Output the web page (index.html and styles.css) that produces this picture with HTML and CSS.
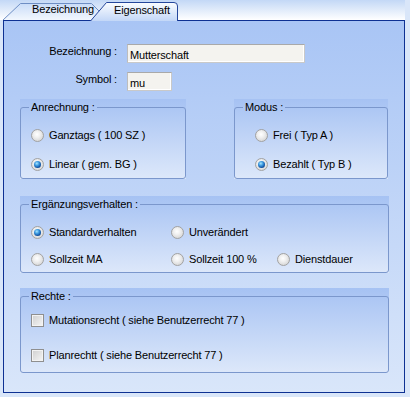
FILE: index.html
```html
<!DOCTYPE html>
<html>
<head>
<meta charset="utf-8">
<link rel="stylesheet" href="styles.css">
</head>
<body>
<div class="window">
  <div class="tabstrip">
    <div class="tab tab-inactive">
      <svg class="tab-shape" width="98" height="20" viewBox="0 0 98 20">
        <defs>
          <linearGradient id="gi" x1="0" y1="0" x2="0" y2="1">
            <stop offset="0" stop-color="#c9dcf8"/>
            <stop offset="1" stop-color="#f3f8fe"/>
          </linearGradient>
        </defs>
        <path d="M0.5 20.5 L18.5 3.5 H89.5 L97.5 11.5 V20.5" fill="url(#gi)" stroke="#6e8ec4" stroke-width="1"/>
      </svg>
      <span class="tab-label">Bezeichnung</span>
    </div>
    <div class="tab tab-active">
      <svg class="tab-shape" width="88" height="21" viewBox="0 0 88 21">
        <defs>
          <linearGradient id="ga" x1="0" y1="0" x2="0" y2="1">
            <stop offset="0" stop-color="#fbfdff"/>
            <stop offset="1" stop-color="#c3d7f7"/>
          </linearGradient>
        </defs>
        <path d="M0.5 21 L16.5 2.5 H84 Q87.5 2.5 87.5 6 V21" fill="url(#ga)" stroke="#25479c" stroke-width="1"/>
      </svg>
      <span class="tab-label">Eigenschaft</span>
    </div>
  </div>
  <div class="panel">
    <div class="form">
      <span class="form-label">Bezeichnung :</span>
      <input class="field field-wide" type="text" value="Mutterschaft">
      <span class="form-label">Symbol :</span>
      <input class="field field-short" type="text" value="mu">
    </div>

    <div class="group-row">
      <div class="group group-anrechnung">
        <fieldset class="box box-two">
          <legend>Anrechnung :</legend>
          <div class="opt"><span class="radio"></span><span>Ganztags ( 100 SZ )</span></div>
          <div class="opt"><span class="radio on"><span class="dot"></span></span><span>Linear ( gem. BG )</span></div>
        </fieldset>
      </div>
      <div class="group group-modus">
        <fieldset class="box box-two">
          <legend>Modus :</legend>
          <div class="opt opt-modus"><span class="radio"></span><span>Frei ( Typ A )</span></div>
          <div class="opt opt-modus"><span class="radio on"><span class="dot"></span></span><span>Bezahlt ( Typ B )</span></div>
        </fieldset>
      </div>
    </div>

    <div class="group group-erg">
      <fieldset class="box box-erg">
        <legend>Ergänzungsverhalten :</legend>
        <div class="erg-grid">
          <div class="opt"><span class="radio on"><span class="dot"></span></span><span>Standardverhalten</span></div>
          <div class="opt"><span class="radio"></span><span>Unverändert</span></div>
          <div></div>
          <div class="opt"><span class="radio"></span><span>Sollzeit MA</span></div>
          <div class="opt"><span class="radio"></span><span>Sollzeit 100 %</span></div>
          <div class="opt"><span class="radio"></span><span>Dienstdauer</span></div>
        </div>
      </fieldset>
    </div>

    <div class="group group-rechte">
      <fieldset class="box box-rechte">
        <legend>Rechte :</legend>
        <div class="opt"><span class="check"></span><span>Mutationsrecht ( siehe Benutzerrecht 77 )</span></div>
        <div class="opt"><span class="check"></span><span>Planrechtt ( siehe Benutzerrecht 77 )</span></div>
      </fieldset>
    </div>
  </div>
</div>
</body>
</html>
```

FILE: styles.css
```css
html, body {
  margin: 0;
  padding: 0;
}

body {
  width: 410px;
  height: 397px;
  overflow: hidden;
  background: #d9e6f9;
  font-family: "Liberation Sans", Arial, sans-serif;
  font-size: 11px;
  line-height: 13px;
  letter-spacing: -0.15px;
  color: #000;
}

.window {
  width: 405px;
}

.tabstrip {
  height: 20px;
  display: flex;
  align-items: flex-start;
  padding-left: 2px;
  background: linear-gradient(#c3d8f6, #ffffff);
  position: relative;
  z-index: 2;
}

.tab {
  position: relative;
  flex: none;
}

.tab-shape {
  position: absolute;
  left: 0;
  top: 0;
  display: block;
}

.tab-label {
  position: relative;
  display: block;
}

.tab-inactive {
  width: 98px;
  height: 20px;
}

.tab-inactive .tab-label {
  padding: 3px 0 0 30px;
}

.tab-active {
  width: 88px;
  height: 21px;
  margin-left: -10px;
}

.tab-active .tab-label {
  padding: 4px 0 0 24px;
}

.panel {
  margin-left: 3px;
  width: 402px;
  height: 373px;
  box-sizing: border-box;
  border: 1px solid #0e3193;
  background: linear-gradient(#a9c5f5, #d9e6fa);
  padding: 23px 15px 0 16px;
}

.form {
  display: grid;
  grid-template-columns: 97px auto;
  column-gap: 10px;
  row-gap: 9px;
  justify-items: start;
}

.form-label {
  justify-self: end;
  padding-top: 1px;
}

.field {
  box-sizing: border-box;
  height: 19px;
  margin: 0;
  padding: 3px 2px 1px 2px;
  font-family: "Liberation Sans", Arial, sans-serif;
  font-size: 11px;
  line-height: 13px;
  letter-spacing: -0.15px;
  color: #000;
  background: #f4f3ef;
  border: 1px solid #c9c9c9;
  border-top-color: #a9a9a9;
  border-left-color: #bdbdbd;
  box-shadow: inset -1px -1px 0 #ffffff;
  outline: none;
}

.field-wide {
  width: 178px;
}

.field-short {
  width: 45px;
}

.group-row {
  display: flex;
  gap: 48px;
  margin-top: 8px;
}

.group {
  background: linear-gradient(#a6c2f3, #dde8fa);
  padding-top: 2px;
}

.group-anrechnung {
  width: 166px;
}

.group-modus {
  width: 154px;
}

.group-erg {
  margin-top: 17px;
}

.group-rechte {
  margin-top: 15px;
}

.box {
  margin: 0;
  border: 1px solid #7b97cc;
  border-radius: 3px;
  padding: 13px 4px 6px 8px;
  min-width: 0;
}

.box legend {
  padding: 0 2px;
  line-height: 13px;
}

.box-two {
  display: flex;
  flex-direction: column;
  gap: 13px;
}

.box-erg {
  padding-bottom: 5px;
}

.box-rechte {
  padding-top: 9px;
  padding-bottom: 9px;
  display: flex;
  flex-direction: column;
  gap: 19px;
}

.erg-grid {
  display: grid;
  grid-template-columns: 140px 106px auto;
  row-gap: 11px;
  margin-left: 2px;
}

.erg-grid .opt {
  margin-left: 0;
}

.opt {
  display: flex;
  align-items: center;
  height: 16px;
  gap: 5px;
  margin-left: 2px;
  white-space: nowrap;
}

.opt-modus {
  margin-left: 12px;
}

.radio {
  flex: none;
  width: 13px;
  height: 13px;
  box-sizing: border-box;
  border-radius: 50%;
  border: 1px solid #a2a2a2;
  background: radial-gradient(circle at 45% 40%, #ffffff 0, #f0f0f0 35%, #d6d6d6 80%, #c4c4c4 100%);
  display: flex;
  align-items: center;
  justify-content: center;
}

.dot {
  width: 7px;
  height: 7px;
  border-radius: 50%;
  background: radial-gradient(circle at 40% 35%, #a8e6ff 0, #3d9ae0 35%, #0f4e9e 70%, #0a2f6e 100%);
}

.check {
  flex: none;
  width: 13px;
  height: 13px;
  box-sizing: border-box;
  border: 1px solid #8f8f8f;
  background: linear-gradient(135deg, #cfcfcf, #f6f6f6);
  box-shadow: inset 0 0 0 1px #f3f3f3;
}
```
